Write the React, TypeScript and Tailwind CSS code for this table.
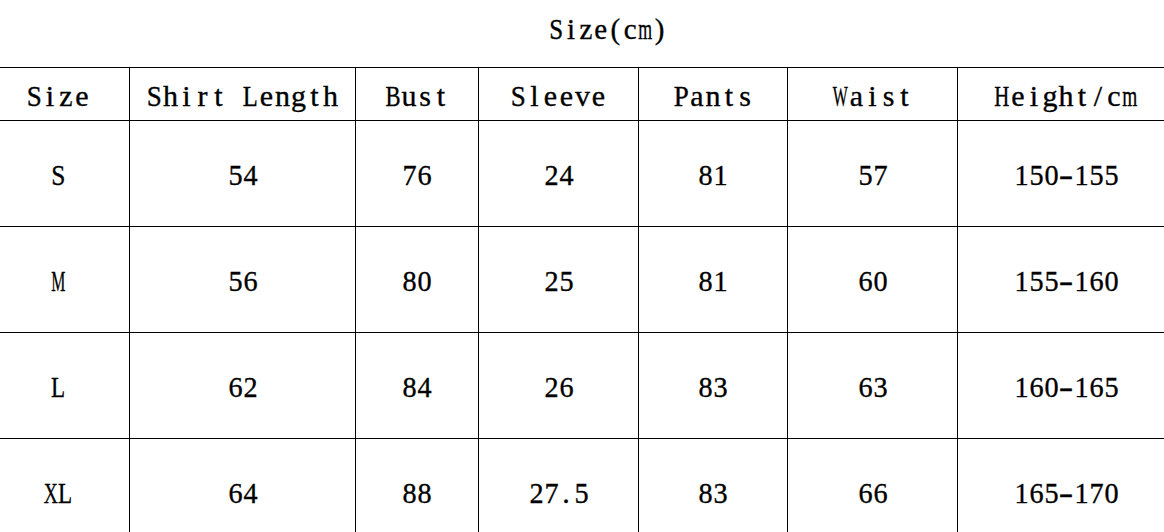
import React from "react";

const headers = ["Size", "Shirt Length", "Bust", "Sleeve", "Pants", "Waist", "Height/cm"];
const rows = [
  ["S", "54", "76", "24", "81", "57", "150-155"],
  ["M", "56", "80", "25", "81", "60", "155-160"],
  ["L", "62", "84", "26", "83", "63", "160-165"],
  ["XL", "64", "88", "27.5", "83", "66", "165-170"],
];

// Liberation Serif (Times) advance widths, per 1000 em
const W: Record<string, number> = {
  " ": 250, "(": 333, ")": 333, "/": 278, "-": 333, ".": 250,
  A: 722, B: 667, C: 667, D: 722, E: 611, F: 556, G: 722, H: 722, I: 333, J: 389, K: 722, L: 611, M: 889,
  N: 722, O: 722, P: 556, Q: 722, R: 667, S: 556, T: 611, U: 722, V: 722, W: 944, X: 722, Y: 722, Z: 611,
  a: 444, b: 500, c: 444, d: 500, e: 444, f: 333, g: 500, h: 500, i: 278, j: 278, k: 500, l: 278, m: 778,
  n: 500, o: 500, p: 500, q: 500, r: 333, s: 389, t: 278, u: 500, v: 500, w: 722, x: 500, y: 500, z: 444,
};

function Mono({ text, cell, size }: { text: string; cell: number; size: number }) {
  return (
    <span className="inline-flex" style={{ fontSize: size }}>
      {text.split("").map((ch, i) => {
        const adv = ((W[ch] ?? 500) / 1000) * size;
        let s = Math.min(1, (cell * 0.94) / adv);
        if (ch === "-") s = 1.45;
        return (
          <span
            key={i}
            className="inline-flex justify-center shrink-0"
            style={{ width: cell }}
          >
            <span className="inline-block shrink-0 whitespace-pre" style={{ transform: `scaleX(${s})` }}>
              {ch}
            </span>
          </span>
        );
      })}
    </span>
  );
}

export default function App() {
  return (
    <div
      className="w-[1164px] h-[532px] overflow-hidden bg-white text-black [-webkit-text-stroke:0.35px_black]"
      style={{ fontFamily: '"Liberation Serif", "Times New Roman", serif' }}
    >
      <div className="h-[67px] flex items-start pt-[13px] pl-[549px] leading-[32px]">
        <Mono text="Size(cm)" cell={14.75} size={29} />
      </div>
      <div className="ml-[-13px] w-[1187px] grid grid-cols-[143px_226px_123px_160px_149px_170px_216px] border-t border-black">
        {headers.map((h, i) => (
          <div
            key={h}
            className={`h-[53px] flex items-center justify-center pt-[3px] border-b border-black leading-[32px] ${i < 6 ? "border-r" : ""}`}
          >
            <Mono text={h} cell={16} size={30} />
          </div>
        ))}
        {rows.map((r) =>
          r.map((c, i) => (
            <div
              key={r[0] + i}
              className={`h-[106px] flex items-center justify-center pt-[3px] border-b border-black leading-[32px] ${i < 6 ? "border-r" : ""}`}
            >
              <Mono text={c} cell={15} size={30} />
            </div>
          ))
        )}
      </div>
    </div>
  );
}
